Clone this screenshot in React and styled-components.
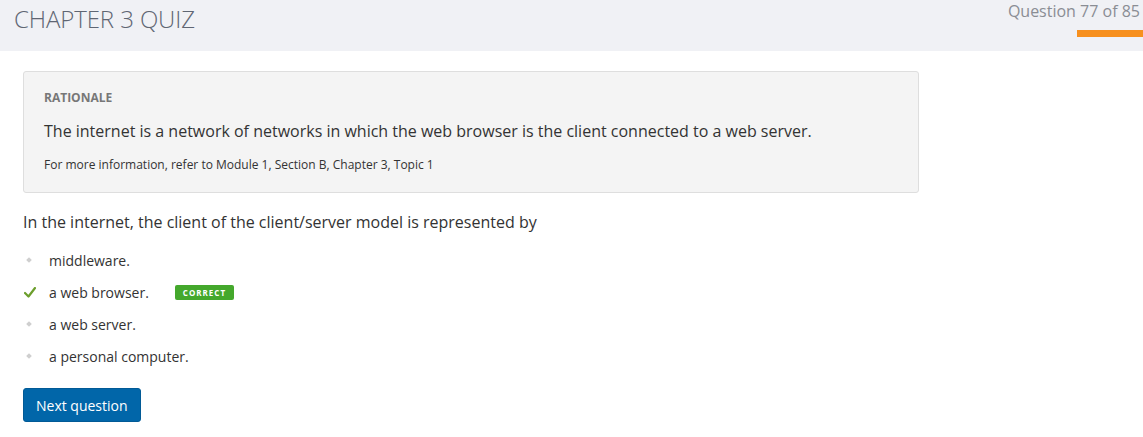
import React from "react";
import styled, { createGlobalStyle } from "styled-components";

const Global = createGlobalStyle`
  html, body { margin: 0; padding: 0; background: #fff; }
  body { font-family: "Open Sans", "Liberation Sans", sans-serif; color: #333; }
`;

const Header = styled.header`
  height: 51px;
  background: #f0f1f5;
  display: flex;
  justify-content: space-between;
  align-items: flex-start;
`;

const Title = styled.h1`
  margin: 0;
  padding: 3px 0 0 14px;
  font-size: 24px;
  font-weight: 300;
  color: #5f6673;
  line-height: 32px;
  letter-spacing: -0.1px;
`;

const Progress = styled.div`
  display: flex;
  flex-direction: column;
  align-items: flex-end;
`;

const ProgressLabel = styled.div`
  font-size: 16px;
  color: #8a8d94;
  line-height: 22px;
  padding: 0 3px 0 0;
`;

const ProgressBar = styled.div`
  margin-top: 8px;
  width: 66px;
  height: 7px;
  background: #f7901e;
`;

const Main = styled.main`
  padding: 20px 0 0 23px;
  width: 896px;
`;

const Rationale = styled.section`
  background: #f4f4f4;
  border: 1px solid #dedede;
  border-radius: 3px;
  padding: 17px 20px 19px 20px;
`;

const Label = styled.div`
  font-size: 12px;
  font-weight: 700;
  color: #777;
  line-height: 17px;
`;

const RationaleText = styled.p`
  margin: 14px 0 0;
  font-size: 16px;
  line-height: 22px;
  color: #333;
`;

const Ref = styled.p`
  margin: 14px 0 0;
  font-size: 12px;
  line-height: 17px;
  color: #333;
`;

const Question = styled.p`
  margin: 18px 0 0;
  font-size: 16px;
  line-height: 22px;
  color: #333;
`;

const Options = styled.ul`
  list-style: none;
  margin: 16px 0 0;
  padding: 0;
  display: flex;
  flex-direction: column;
  gap: 10px;
`;

const Option = styled.li`
  display: flex;
  align-items: center;
  height: 22px;
  font-size: 14px;
  color: #333;
`;

const Marker = styled.span`
  width: 26px;
  display: flex;
  align-items: center;
  justify-content: flex-start;
  padding-left: ${(p) => (p.$check ? "1px" : "3px")};
  box-sizing: border-box;
`;

const Dot = styled.span`
  width: 4px;
  height: 4px;
  background: #cfcfcf;
  transform: rotate(45deg);
  margin-left: 1px;
`;

const Badge = styled.span`
  margin-left: 26px;
  background: #44a82c;
  color: #fff;
  font-size: 8px;
  font-weight: 700;
  letter-spacing: 1px;
  border-radius: 2px;
  padding: 0 8px;
  height: 15px;
  line-height: 15px;
`;

const Button = styled.button`
  margin-top: 21px;
  background: #0166a9;
  color: #fff;
  border: 1px solid #015a96;
  border-radius: 3px;
  font-family: "Open Sans", "Liberation Sans", sans-serif;
  font-size: 14px;
  height: 34px;
  padding: 0 12px;
  cursor: pointer;
`;

const Check = () => (
  <svg width="12" height="11" viewBox="0 0 12 11">
    <path d="M1 6 L4.5 9.5 L11 1" fill="none" stroke="#6c9e2c" strokeWidth="2.2" strokeLinecap="round" strokeLinejoin="round" />
  </svg>
);

const options = [
  { text: "middleware.", correct: false },
  { text: "a web browser.", correct: true },
  { text: "a web server.", correct: false },
  { text: "a personal computer.", correct: false },
];

export default function App() {
  return (
    <>
      <Global />
      <Header>
        <Title>CHAPTER 3 QUIZ</Title>
        <Progress>
          <ProgressLabel>Question 77 of 85</ProgressLabel>
          <ProgressBar />
        </Progress>
      </Header>
      <Main>
        <Rationale>
          <Label>RATIONALE</Label>
          <RationaleText>
            The internet is a network of networks in which the web browser is the client connected to a web server.
          </RationaleText>
          <Ref>For more information, refer to Module 1, Section B, Chapter 3, Topic 1</Ref>
        </Rationale>
        <Question>In the internet, the client of the client/server model is represented by</Question>
        <Options>
          {options.map((o) => (
            <Option key={o.text}>
              <Marker $check={o.correct}>{o.correct ? <Check /> : <Dot />}</Marker>
              {o.text}
              {o.correct && <Badge>CORRECT</Badge>}
            </Option>
          ))}
        </Options>
        <Button>Next question</Button>
      </Main>
    </>
  );
}
